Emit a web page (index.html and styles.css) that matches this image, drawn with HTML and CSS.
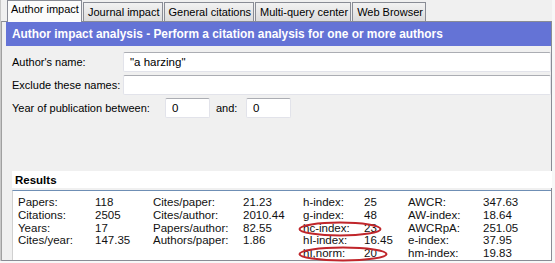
FILE: index.html
```html
<!DOCTYPE html>
<html>
<head>
<meta charset="utf-8">
<link rel="stylesheet" href="styles.css">
</head>
<body>
<div class="frame">
  <div class="tabs">
    <div class="tab active">Author impact</div>
    <div class="tab">Journal impact</div>
    <div class="tab">General citations</div>
    <div class="tab">Multi-query center</div>
    <div class="tab">Web Browser</div>
  </div>
  <div class="page">
    <div class="banner">Author impact analysis - Perform a citation analysis for one or more authors</div>
    <div class="form">
      <div class="row">
        <span class="label">Author's name:</span>
        <div class="field grow">"a harzing"</div>
      </div>
      <div class="row">
        <span class="label">Exclude these names:</span>
        <div class="field grow"></div>
      </div>
      <div class="row">
        <span class="label year-label">Year of publication between:</span>
        <div class="field small">0</div>
        <span class="and">and:</span>
        <div class="field small">0</div>
      </div>
    </div>
    <div class="results">
      <div class="results-title">Results</div>
      <div class="results-box">
        <div class="grid">
          <span>Papers:</span><span>118</span><span>Cites/paper:</span><span>21.23</span><span>h-index:</span><span>25</span><span>AWCR:</span><span>347.63</span>
          <span>Citations:</span><span>2505</span><span>Cites/author:</span><span>2010.44</span><span>g-index:</span><span>48</span><span>AW-index:</span><span>18.64</span>
          <span>Years:</span><span>17</span><span>Papers/author:</span><span>82.55</span><span>hc-index:</span><span>23</span><span>AWCRpA:</span><span>251.05</span>
          <span>Cites/year:</span><span>147.35</span><span>Authors/paper:</span><span>1.86</span><span>hI-index:</span><span>16.45</span><span>e-index:</span><span>37.95</span>
          <span></span><span></span><span></span><span></span><span>hI,norm:</span><span>20</span><span>hm-index:</span><span>19.83</span>
        </div>
        <svg class="ring ring-hc" width="84" height="16" viewBox="0 0 84 16"><ellipse cx="42" cy="8" rx="40.5" ry="6.5" fill="none" stroke="#c0262b" stroke-width="2"/></svg>
        <svg class="ring ring-norm" width="90" height="16" viewBox="0 0 90 16"><ellipse cx="45" cy="8" rx="43.5" ry="6.5" fill="none" stroke="#c0262b" stroke-width="2"/></svg>
      </div>
    </div>
  </div>
</div>
</body>
</html>
```

FILE: styles.css
```css
* { box-sizing: border-box; }
html, body { margin: 0; padding: 0; }
body {
  background: #f7f7f7;
  font-family: "Liberation Sans", Arial, sans-serif;
  font-size: 11px;
  color: #000;
  width: 555px;
  height: 263px;
  overflow: hidden;
}
.frame {
  width: 552px;
  height: 261px;
  display: flex;
  flex-direction: column;
  background: #f0f0f0;
  border-left: 1px solid #c8c8c8;
}
.tabs {
  display: flex;
  align-items: flex-end;
  height: 22px;
  padding-left: 6px;
  position: relative;
  z-index: 1;
}
.tab {
  height: 19px;
  margin-right: 1px;
  padding: 0 2px 0 4px;
  border: 1px solid #898c95;
  border-bottom: none;
  background: linear-gradient(#f2f2f2, #dcdcdc);
  display: flex;
  align-items: center;
  font-size: 11px;
  line-height: 1;
  white-space: nowrap;
  color: #000;
}
.tab.active {
  height: 22px;
  width: 75px;
  margin-right: 1px;
  padding: 3px 0 0 3px;
  background: #fbfbfb;
  font-size: 11px;
  align-items: flex-start;
  margin-bottom: -1px;
}
.page {
  flex: 1;
  border: 1px solid #898c95;
  border-left: 1px solid #a0a0a0;
  padding-left: 4px;
  display: flex;
  flex-direction: column;
  background: #f0f0f0;
}
.banner {
  height: 24px;
  background: #6473d6;
  color: #fff;
  font-weight: bold;
  font-size: 11.9px;
  padding-left: 6px;
  display: flex;
  align-items: center;
}
.form {
  padding: 6px 0 0 6px;
  display: flex;
  flex-direction: column;
  gap: 3px;
}
.row {
  display: flex;
  align-items: center;
  height: 20px;
}
.label {
  width: 111px;
  flex: none;
}
.year-label { width: 153px; }
.field {
  height: 20px;
  background: #fff;
  border: 1px solid #e2e3ea;
  border-top-color: #abadb3;
  border-radius: 2px;
  padding: 0 6px;
  display: flex;
  align-items: center;
  font-size: 11.5px;
}
.grow { flex: 1; }
.small { width: 45px; }
.and { width: 36px; padding-left: 6px; flex: none; }
.results {
  margin-top: 53px;
  padding-left: 6px;
  display: flex;
  flex-direction: column;
  flex: 1;
}
.results-title {
  height: 17px;
  background: #fff;
  font-weight: bold;
  font-size: 11.5px;
  padding-left: 3px;
  display: flex;
  align-items: center;
  margin-right: -1px;
}
.results-box {
  position: relative;
  margin-top: 2px;
  flex: 1;
  background: #fff;
  border-top: 1px solid #6f8fb5;
  border-left: 1px solid #d0d0d0;
  padding: 5px 0 0 5px;
}
.grid {
  display: grid;
  grid-template-columns: 77px 58px 90px 60px 61px 44px 75px 1fr;
  grid-auto-rows: 12.8px;
  line-height: 12.8px;
  font-size: 11.5px;
  color: #111;
}
.ring {
  position: absolute;
  display: block;
}
.ring-hc { left: 285px; top: 30px; }
.ring-norm { left: 285px; top: 55px; }
```
